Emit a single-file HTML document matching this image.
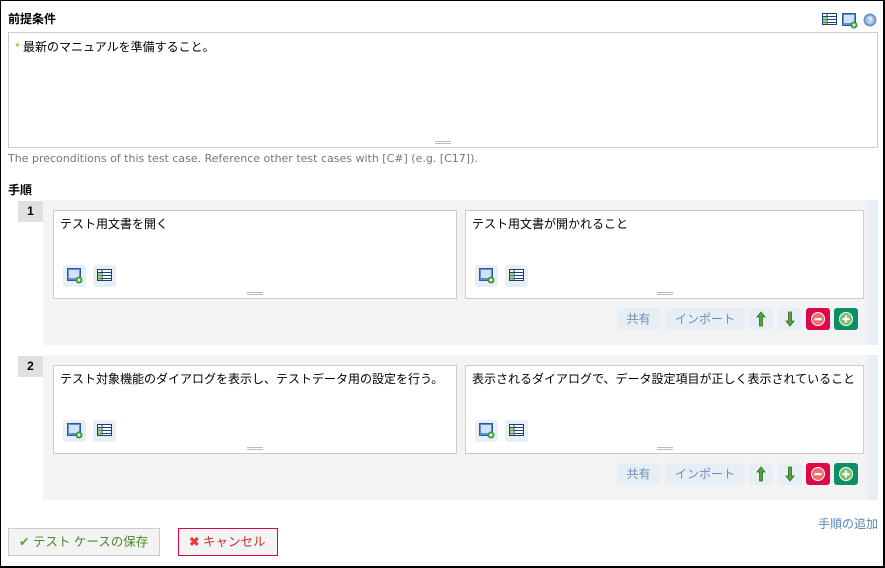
<!DOCTYPE html>
<html><head><meta charset="utf-8"><style>
*{box-sizing:border-box;margin:0;padding:0}
body{width:885px;height:568px;overflow:hidden;background:#fff;font-family:"Liberation Sans","Noto Sans CJK JP",sans-serif;font-size:12px;color:#000;position:relative}
.frame{position:absolute;left:0;top:0;width:885px;height:568px;border:1px solid #000;border-right:2px solid #000;border-bottom:2px solid #000}
.abs{position:absolute}
.lbl{font-weight:bold;font-size:12px}
.ta{border:1px solid #ccc;background:#fff}
.grip{position:absolute;left:50%;bottom:3px;width:16px;margin-left:-8px;height:3px;border-top:1px solid #bbb;border-bottom:1px solid #bbb}
.num{position:absolute;left:18px;width:25px;height:21px;background:#e0e0e0;font-weight:bold;text-align:center;line-height:21px;font-size:12px}
.step{position:absolute;left:43px;width:825px;height:145px;background:#f3f3f3}
.strip{position:absolute;left:868px;width:10px;height:145px;background:#e8eef6}
.box{position:absolute;top:10px;width:404px;height:89px;background:#fff;border:1px solid #ccc;padding:4px 6px;font-size:12px}
.ib{position:absolute;top:54px;width:23px;height:22px;background:#e8eef5;border-radius:3px}
.ib svg{position:absolute;left:4px;top:3px}
.btn{position:absolute;top:108px;height:22px;background:#e8eef5;border-radius:3px;color:#6b8fb5;font-size:12px;line-height:22px;text-align:center}
.btn svg{position:absolute;left:5px;top:3px}
.red{background:#e0064a}.grn{background:#0c8f66}
</style></head><body>
<svg width="0" height="0" style="position:absolute"><defs>
<g id="img"><rect x="0.5" y="0.5" width="13" height="12" fill="#5d8fd0" stroke="#2a5a9a"/><rect x="2" y="2" width="10" height="8" fill="#cfe2f7"/><circle cx="12" cy="12" r="3.5" fill="#3a9a3a"/><path d="M10.3 12h3.4M12 10.3v3.4" stroke="#fff" stroke-width="1.2"/></g>
<g id="tbl"><rect x="0.5" y="1.5" width="14" height="11" fill="#fff" stroke="#1a3f7a"/><path d="M1 4.5h14M1 7.5h14M1 10.5h14M5 2v11" stroke="#1a3f7a"/><rect x="1" y="5" width="4" height="7" fill="#7bbf4b" opacity=".7"/></g>
<g id="up"><path d="M7 1L3 6h2.5v9h3V6H11z" fill="#5aa03a" stroke="#2f6e22" stroke-width=".8"/></g>
<g id="dn"><path d="M7 15L3 10h2.5V1h3v9H11z" fill="#5aa03a" stroke="#2f6e22" stroke-width=".8"/></g>
<g id="mi"><circle cx="7" cy="8" r="6.5" fill="#f07070" stroke="#fff" stroke-width="1"/><rect x="3.5" y="7" width="7" height="2.2" fill="#fff"/></g>
<g id="pl"><circle cx="7" cy="8" r="6.5" fill="#7cc070" stroke="#fff" stroke-width="1"/><path d="M3.5 8h7M7 4.5v7" stroke="#fff" stroke-width="2.2"/></g>
</defs></svg>
<div class="abs lbl" style="left:8px;top:10px">前提条件</div>
<svg class="abs" style="left:822px;top:12px" width="57" height="17">
<use href="#tbl" x="0" y="0"/><use href="#img" x="20" y="1"/>
<circle cx="48" cy="8" r="6.5" fill="#6e95c8"/><circle cx="48" cy="8" r="4.5" fill="#a9c4e6"/><text x="48" y="11" font-size="8" text-anchor="middle" fill="#fff" font-weight="bold">?</text>
</svg>
<div class="abs ta" style="left:8px;top:32px;width:870px;height:116px;padding:5px 6px"><span style="color:#c8960a">*</span> 最新のマニュアルを準備すること。<div class="grip"></div></div>
<div class="abs" style="left:8px;top:152px;color:#777;font-size:11px;font-family:'DejaVu Sans',sans-serif">The preconditions of this test case. Reference other test cases with [C#] (e.g. [C17]).</div>
<div class="abs lbl" style="left:8px;top:181px">手順</div>

<div class="num" style="top:201px">1</div>
<div class="step" style="top:200px">
<div class="box" style="left:10px">テスト用文書を開く<div class="ib" style="left:9px"><svg width="16" height="16"><use href="#img"/></svg></div><div class="ib" style="left:39px"><svg width="16" height="16"><use href="#tbl"/></svg></div><div class="grip"></div></div>
<div class="box" style="left:422px;width:399px">テスト用文書が開かれること<div class="ib" style="left:9px"><svg width="16" height="16"><use href="#img"/></svg></div><div class="ib" style="left:39px"><svg width="16" height="16"><use href="#tbl"/></svg></div><div class="grip"></div></div>
<div class="btn" style="left:574px;width:43px">共有</div><div class="btn" style="left:622px;width:80px">インポート</div>
<div class="btn" style="left:706px;width:24px"><svg width="14" height="16"><use href="#up"/></svg></div><div class="btn" style="left:735px;width:24px"><svg width="14" height="16"><use href="#dn"/></svg></div>
<div class="btn red" style="left:763px;width:24px"><svg width="14" height="16"><use href="#mi"/></svg></div><div class="btn grn" style="left:791px;width:24px"><svg width="14" height="16"><use href="#pl"/></svg></div>
</div>
<div class="strip" style="top:200px"></div>

<div class="num" style="top:356px">2</div>
<div class="step" style="top:355px">
<div class="box" style="left:10px">テスト対象機能のダイアログを表示し、テストデータ用の設定を行う。<div class="ib" style="left:9px"><svg width="16" height="16"><use href="#img"/></svg></div><div class="ib" style="left:39px"><svg width="16" height="16"><use href="#tbl"/></svg></div><div class="grip"></div></div>
<div class="box" style="left:422px;width:399px">表示されるダイアログで、データ設定項目が正しく表示されていること<div class="ib" style="left:9px"><svg width="16" height="16"><use href="#img"/></svg></div><div class="ib" style="left:39px"><svg width="16" height="16"><use href="#tbl"/></svg></div><div class="grip"></div></div>
<div class="btn" style="left:574px;width:43px">共有</div><div class="btn" style="left:622px;width:80px">インポート</div>
<div class="btn" style="left:706px;width:24px"><svg width="14" height="16"><use href="#up"/></svg></div><div class="btn" style="left:735px;width:24px"><svg width="14" height="16"><use href="#dn"/></svg></div>
<div class="btn red" style="left:763px;width:24px"><svg width="14" height="16"><use href="#mi"/></svg></div><div class="btn grn" style="left:791px;width:24px"><svg width="14" height="16"><use href="#pl"/></svg></div>
</div>
<div class="strip" style="top:355px"></div>

<div class="abs" style="left:818px;top:515px;color:#5b86b5;font-size:12px">手順の追加</div>
<div class="abs" style="left:8px;top:528px;width:152px;height:28px;border:1px solid #ccc;background:#f3f3f3;color:#4a8a2a;line-height:26px;padding-left:10px;font-size:12.5px"><span style="color:#5aa03a">✔</span> テスト ケースの保存</div>
<div class="abs" style="left:178px;top:528px;width:100px;height:28px;border:1px solid #e0064a;background:#f3f3f3;color:#c03030;line-height:26px;padding-left:10px;font-size:12.5px"><span style="color:#e04040;font-weight:bold">✖</span> キャンセル</div>
<div class="frame"></div>
</body></html>
